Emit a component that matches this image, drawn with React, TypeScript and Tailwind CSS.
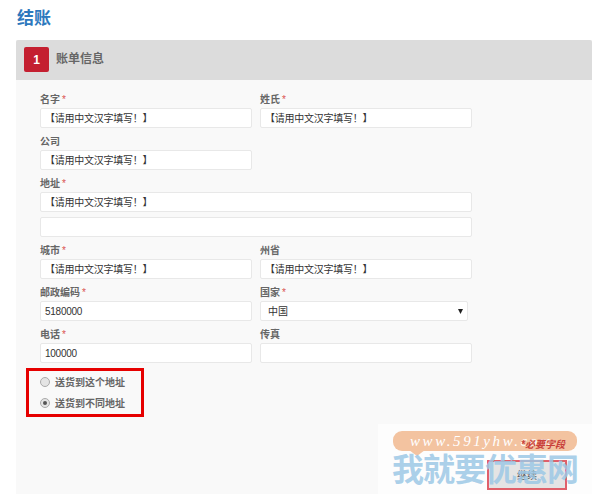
const cjk = "font-['Liberation_Sans','Noto_Sans_CJK_SC',sans-serif]";
const hint = "【请用中文汉字填写！】";

function Field({ label, required, value, wide }: { label: string; required?: boolean; value?: string; wide?: boolean }) {
  return (
    <div className={wide ? "col-span-2" : ""}>
      <div className="h-[20px] text-[10px] leading-[23px] font-bold text-[#666]">
        {label}
        {required && <span className="ml-[2px] font-normal text-[#d9534f]">*</span>}
      </div>
      <div className="flex h-[20px] items-center rounded-[2px] border border-[#e8e8e8] bg-white px-[4px] text-[10px] tracking-[-0.25px] text-[#333]">
        {value}
      </div>
    </div>
  );
}

function Radio({ label, checked }: { label: string; checked?: boolean }) {
  return (
    <div className="flex h-[21px] items-center gap-[5px]">
      <span className="flex h-[10px] w-[10px] items-center justify-center rounded-full border border-[#aaa] bg-[#e4e4e4]">
        {checked && <span className="h-[4px] w-[4px] rounded-full bg-[#555]" />}
      </span>
      <span className="text-[10px] font-bold text-[#666]">{label}</span>
    </div>
  );
}

export default function App() {
  return (
    <div className={`relative h-[494px] w-[592px] overflow-hidden bg-white ${cjk}`}>
      <h1 className="flex h-[40px] items-center pb-[3px] pl-[17px] text-[17px] font-bold text-[#2d78bd]">结账</h1>

      <div className="ml-[16px] h-[454px] bg-[#f9f9f9]">
        <div className="flex h-[40px] items-center gap-[7px] rounded-t-[2px] bg-[#dcdcdc] pb-[1px] pl-[8px]">
          <div className="flex h-[25px] w-[25px] items-center justify-center rounded-[2px] bg-[#c41f30] text-[12px] font-bold text-white">1</div>
          <div className="pb-[1px] text-[12px] font-bold text-[#666]">账单信息</div>
        </div>

        <div className="w-[456px] pt-[8px] pl-[24px]">
          <div className="grid grid-cols-[212px_212px] gap-x-[8px] gap-y-[2px]">
            <Field label="名字" required value={hint} />
            <Field label="姓氏" required value={hint} />
            <Field label="公司" value={hint} wide={false} />
            <div />
            <Field label="地址" required value={hint} wide />
            <div className="col-span-2 mt-[3px] mb-[-7px] h-[20px] rounded-[2px] border border-[#e8e8e8] bg-white" />
            <div className="col-span-2 h-[5px]" />
            <Field label="城市" required value={hint} />
            <Field label="州省" value={hint} />
            <Field label="邮政编码" required value="5180000" />
            <div>
              <div className="h-[20px] text-[10px] leading-[23px] font-bold text-[#666]">
                国家<span className="ml-[2px] font-normal text-[#d9534f]">*</span>
              </div>
              <div className="flex h-[20px] w-[208px] items-center justify-between rounded-[2px] border border-[#e8e8e8] bg-white pr-[4px] pl-[7px] text-[10px] text-[#333]">
                中国
                <svg width="5" height="5" viewBox="0 0 5 5"><path d="M0 0h5L2.5 5z" fill="#222" /></svg>
              </div>
            </div>
            <Field label="电话" required value="100000" />
            <Field label="传真" />
          </div>
        </div>

        <div className="mt-[5px] ml-[10px] flex h-[49px] w-[118px] flex-col justify-center border-[3px] border-[#e60000] pl-[11px]">
          <Radio label="送货到这个地址" />
          <Radio label="送货到不同地址" checked />
        </div>
      </div>

      <div className="absolute top-[424px] left-[378px] h-[70px] w-[214px] bg-white/70" />
      <div className="absolute top-[431px] left-[393px] flex h-[20px] w-[184px] items-center rounded-[9px] bg-[#f3c3a0] pl-[17px] font-['Liberation_Serif',serif] text-[15px] tracking-[2.6px] text-white italic">
        www.591yhw.com
      </div>
      <div className="absolute top-[450px] left-[409px] h-0 w-0 border-x-[8px] border-t-[6px] border-x-transparent border-t-[#f3c3a0]" />
      <div className="absolute top-[437px] left-[521px] text-[10px] font-bold text-[#c9403a] italic">*必要字段</div>
      <div className="absolute top-[460px] left-[487px] flex h-[30px] w-[80px] items-center justify-center border-[2px] border-[#e0606a] bg-[#e4e4e4] pt-[1px] text-[10px] text-[#555]">继续</div>
      <div className="absolute top-[452px] left-[392px] text-[32px] leading-[36px] font-bold tracking-[-1px] text-[#9cc8e6]/85">我就要优惠网</div>
    </div>
  );
}
